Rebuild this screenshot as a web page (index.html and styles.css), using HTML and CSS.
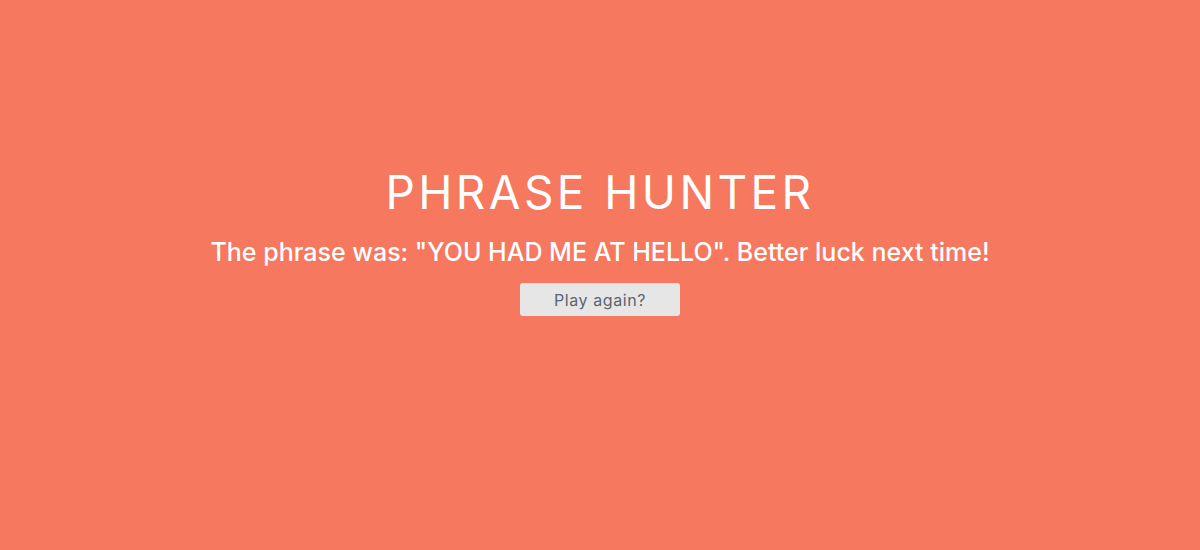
FILE: index.html
```html
<!DOCTYPE html>
<html lang="en">
<head>
<meta charset="utf-8">
<title>Phrase Hunter</title>
<link rel="stylesheet" href="styles.css">
</head>
<body>
<div class="overlay">
  <h2 class="title">PHRASE HUNTER</h2>
  <h1 class="message">The phrase was: "YOU HAD ME AT HELLO". Better luck next time!</h1>
  <button class="btn-reset">Play again?</button>
</div>
</body>
</html>
```
FILE: styles.css
```css
html, body {
  margin: 0;
  padding: 0;
  height: 100%;
}
body {
  background: #f5785f;
  font-family: Inter, "Open Sans", sans-serif;
}
.overlay {
  display: flex;
  flex-direction: column;
  align-items: center;
  padding-top: 165px;
  color: #fff;
}
.title {
  margin: 0;
  font-size: 46px;
  font-weight: 400;
  line-height: 54px;
  letter-spacing: 3.4px;
}
.message {
  margin: 17px 0 0;
  font-size: 25px;
  font-weight: 500;
  line-height: 32px;
  letter-spacing: 0;
}
.btn-reset {
  margin-top: 15px;
  width: 160px;
  height: 33px;
  border: none;
  border-radius: 3px;
  background: #e6e6e6;
  color: #5b6470;
  font-family: Inter, "Open Sans", sans-serif;
  font-size: 16px;
  letter-spacing: 0.6px;
}
```
